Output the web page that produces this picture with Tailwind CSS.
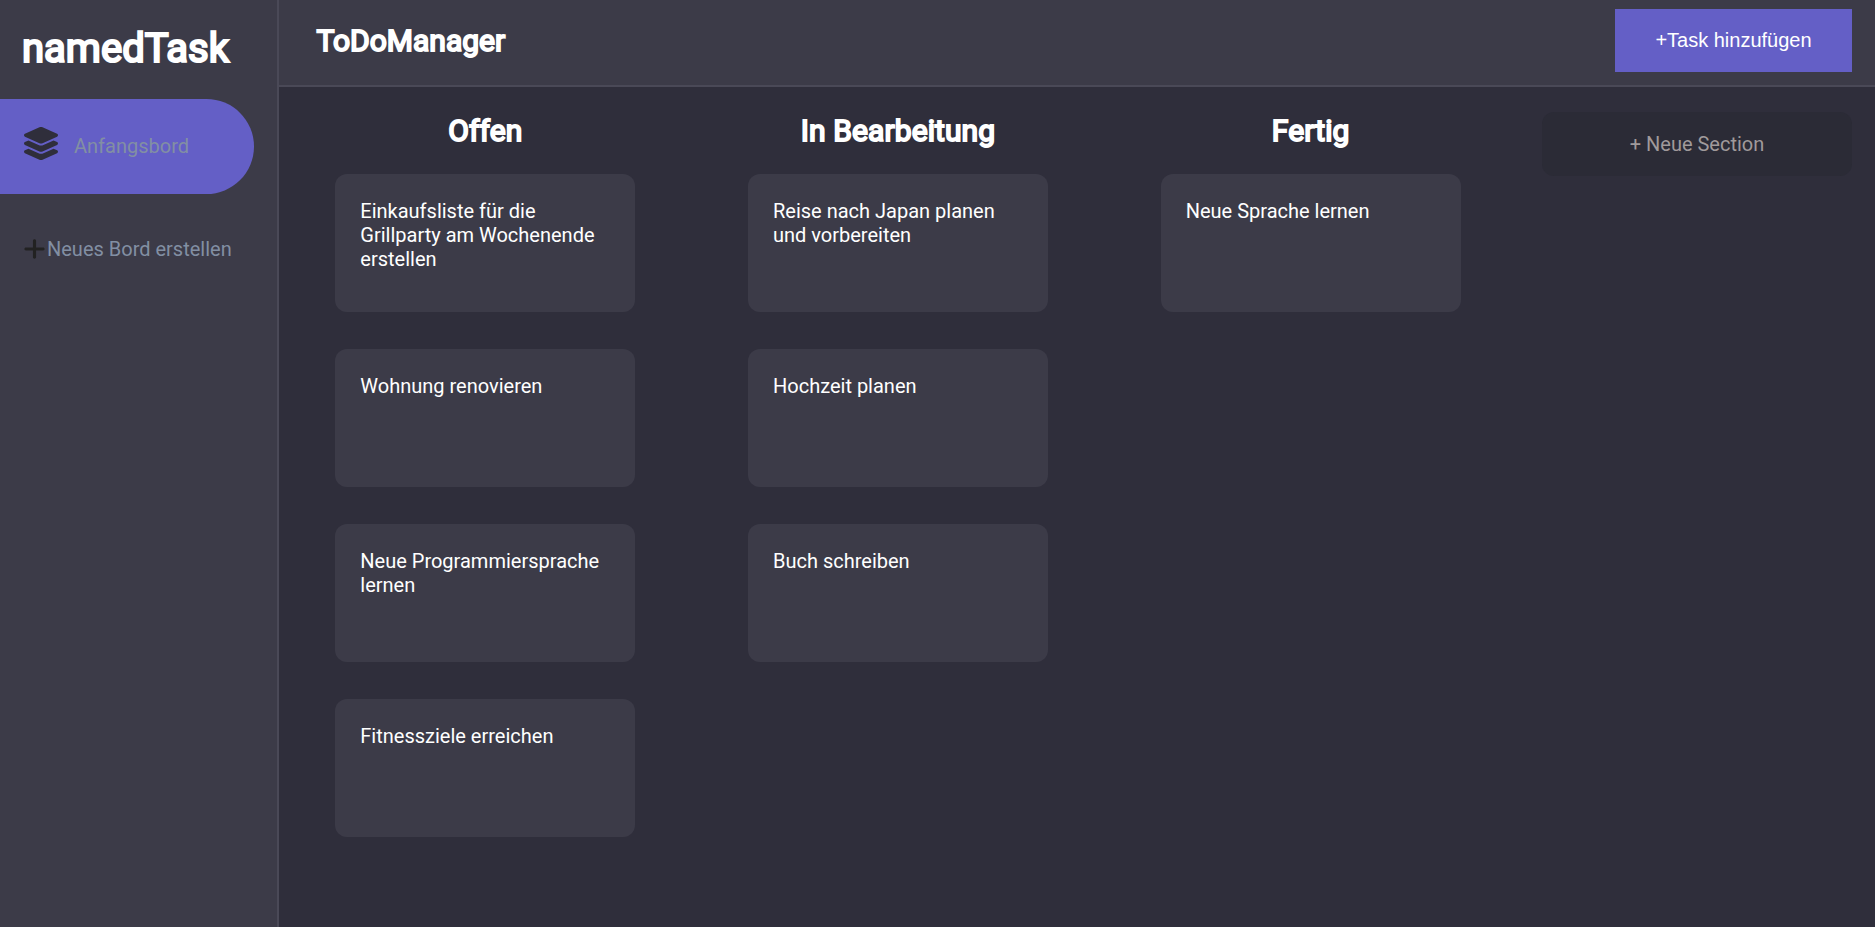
<!DOCTYPE html>
<html lang="de">
<head>
<meta charset="utf-8">
<title>ToDoManager</title>
<script src="https://cdn.jsdelivr.net/npm/@tailwindcss/browser@4"></script>
</head>
<body class="flex h-screen overflow-hidden bg-[#2f2e3b] font-[Roboto,sans-serif] text-[20px] leading-6 text-white">
  <aside class="flex w-[279px] shrink-0 flex-col border-r-2 border-[#4a4957] bg-[#3c3b48]">
    <h1 class="mt-6 ml-[22px] text-[40px] leading-[49px] font-normal [-webkit-text-stroke:2.2px_white]">namedTask</h1>
    <div class="mt-[26px] flex h-[95px] w-[254px] items-center rounded-r-full bg-[#645fc6] pl-6">
      <svg class="mb-[7px] h-[33px] w-[34px]" viewBox="32 0 512 512" preserveAspectRatio="none" fill="#2f2e3b"><path d="M264.5 5.2c14.9-6.9 32.1-6.9 47 0l218.6 101c8.5 3.9 13.9 12.4 13.9 21.8s-5.4 17.9-13.9 21.8l-218.6 101c-14.9 6.9-32.1 6.9-47 0L45.9 149.8C37.4 145.8 32 137.3 32 128s5.4-17.9 13.9-21.8L264.5 5.2zM476.9 209.6l53.2 24.6c8.5 3.9 13.9 12.4 13.9 21.8s-5.4 17.9-13.9 21.8l-218.6 101c-14.9 6.9-32.1 6.9-47 0L45.9 277.8C37.4 273.8 32 265.3 32 256s5.4-17.9 13.9-21.8l53.2-24.6 152 70.2c23.4 10.8 50.4 10.8 73.8 0l152-70.2zm-152 198.2l152-70.2 53.2 24.6c8.5 3.9 13.9 12.4 13.9 21.8s-5.4 17.9-13.9 21.8l-218.6 101c-14.9 6.9-32.1 6.9-47 0L45.9 405.8C37.4 401.8 32 393.3 32 384s5.4-17.9 13.9-21.8l53.2-24.6 152 70.2c23.4 10.8 50.4 10.8 73.8 0z"/></svg>
      <span class="mb-0.5 ml-4 text-[#828fa3]">Anfangsbord</span>
    </div>
    <div class="mt-[43px] flex items-center pl-6">
      <svg class="h-5 w-[21px]" viewBox="8 40 432 432" preserveAspectRatio="none" fill="#222222"><path d="M256 80c0-17.700-14.300-32-32-32s-32 14.300-32 32v144H48c-17.700 0-32 14.300-32 32s14.300 32 32 32h144v144c0 17.700 14.300 32 32 32s32-14.300 32-32V288h144c17.700 0 32-14.300 32-32s-14.300-32-32-32H256V80z"/></svg>
      <span class="ml-0.5 whitespace-nowrap text-[#828fa3]">Neues Bord erstellen</span>
    </div>
  </aside>
  <main class="flex min-w-0 grow flex-col">
    <header class="flex h-[87px] shrink-0 items-start justify-between border-b-2 border-[#4a4957] bg-[#3c3b48] pr-[23px] pl-[37.500px]">
      <h2 class="mt-[22px] text-[30px] leading-[38px] font-normal [-webkit-text-stroke:1.9px_white]">ToDoManager</h2>
      <button class="mt-[9px] h-[63px] w-[237px] bg-[#645fc6] pb-0.5 font-['Liberation_Sans',Arial,sans-serif] text-[20px]">+Task hinzufügen</button>
    </header>
    <div class="flex grow items-start pt-[25px] pr-[23px] pl-[56.300px]">
      <section class="mr-[112.700px] flex w-[300px] shrink-0 flex-col items-center">
        <h3 class="mb-6 text-[30px] leading-[38px] font-normal tracking-[0.1px] [-webkit-text-stroke:1.9px_white]">Offen</h3>
        <div class="flex w-full flex-col gap-[37px]">
          <div class="h-[138px] rounded-xl bg-[#3c3b48] px-[25px] pt-[25px]">Einkaufsliste für die<br>Grillparty am Wochenende<br>erstellen</div>
          <div class="h-[138px] rounded-xl bg-[#3c3b48] px-[25px] pt-[25px]">Wohnung renovieren</div>
          <div class="h-[138px] rounded-xl bg-[#3c3b48] px-[25px] pt-[25px]">Neue Programmiersprache<br>lernen</div>
          <div class="h-[138px] rounded-xl bg-[#3c3b48] px-[25px] pt-[25px]">Fitnessziele erreichen</div>
        </div>
      </section>
      <section class="mr-[112.700px] flex w-[300px] shrink-0 flex-col items-center">
        <h3 class="mb-6 text-[30px] leading-[38px] font-normal tracking-[0.1px] [-webkit-text-stroke:1.9px_white]">In Bearbeitung</h3>
        <div class="flex w-full flex-col gap-[37px]">
          <div class="h-[138px] rounded-xl bg-[#3c3b48] px-[25px] pt-[25px]">Reise nach Japan planen<br>und vorbereiten</div>
          <div class="h-[138px] rounded-xl bg-[#3c3b48] px-[25px] pt-[25px]">Hochzeit planen</div>
          <div class="h-[138px] rounded-xl bg-[#3c3b48] px-[25px] pt-[25px]">Buch schreiben</div>
        </div>
      </section>
      <section class="flex w-[300px] shrink-0 flex-col items-center">
        <h3 class="mb-6 text-[30px] leading-[38px] font-normal tracking-[0.1px] [-webkit-text-stroke:1.9px_white]">Fertig</h3>
        <div class="flex w-full flex-col gap-[37px]">
          <div class="h-[138px] rounded-xl bg-[#3c3b48] px-[25px] pt-[25px]">Neue Sprache lernen</div>
        </div>
      </section>
      <button class="ml-auto h-16 w-[310px] rounded-xl bg-[#2b2b36] text-[#a09a9b]">+ Neue Section</button>
    </div>
  </main>
</body>
</html>
